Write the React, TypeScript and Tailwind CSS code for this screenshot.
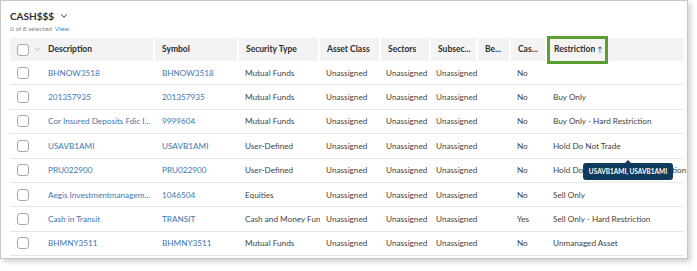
import { ChevronDown } from "lucide-react";

const Cols = [
  { key: "description", label: "Description", width: "w-[143px] shrink-0" },
  { key: "symbol", label: "Symbol", width: "w-[84px] shrink-0" },
  { key: "type", label: "Security Type", width: "w-[81px] shrink-0" },
  { key: "asset", label: "Asset Class", width: "w-[61px] shrink-0" },
  { key: "sectors", label: "Sectors", width: "w-[50px] shrink-0" },
  { key: "subsec", label: "Subsec...", width: "w-[47px] shrink-0" },
  { key: "be", label: "Be...", width: "w-[33px] shrink-0" },
  { key: "cas", label: "Cas...", width: "w-[36px] shrink-0" },
  { key: "restriction", label: "Restriction", width: "flex-1 min-w-0" },
];

const Rows = [
  { description: "BHNOW3518", symbol: "BHNOW3518", type: "Mutual Funds", cas: "No", restriction: "" },
  { description: "201357935", symbol: "201357935", type: "Mutual Funds", cas: "No", restriction: "Buy Only" },
  { description: "Cor Insured Deposits Fdic I...", symbol: "9999604", type: "Mutual Funds", cas: "No", restriction: "Buy Only - Hard Restriction" },
  { description: "USAVB1AMI", symbol: "USAVB1AMI", type: "User-Defined", cas: "No", restriction: "Hold Do Not Trade" },
  { description: "PRU022900", symbol: "PRU022900", type: "User-Defined", cas: "No", restriction: "Hold Do Not Trade - Hard Restriction" },
  { description: "Aegis Investmentmanagem...", symbol: "1046504", type: "Equities", cas: "No", restriction: "Sell Only" },
  { description: "Cash in Transit", symbol: "TRANSIT", type: "Cash and Money Funds", cas: "Yes", restriction: "Sell Only - Hard Restriction" },
  { description: "BHMNY3511", symbol: "BHMNY3511", type: "Mutual Funds", cas: "No", restriction: "Unmanaged Asset" },
];

const Checkbox = () => (
  <span className="block w-[12px] h-[12px] rounded-[3px] border border-[#a8a8a8] bg-white shrink-0" />
);

export default function App() {
  return (
    <div className="w-[697px] h-[271px] bg-white font-['Lato',sans-serif]">
      <div className="relative w-[688px] h-[259px] border border-[#c6c6c6] bg-white shadow-[3px_3px_5px_rgba(0,0,0,0.18)] px-[9px] pt-[8px]">
        <div className="flex items-center gap-[5px] h-[14px] text-[10px] font-bold text-[#2e2e2e]">
          CASH$$$
          <ChevronDown size={10} strokeWidth={2.5} className="text-[#555]" />
        </div>
        <div className="h-[10px] leading-[10px] text-[6.5px] text-[#888] mt-[1px]">
          0 of 8 selected <span className="text-[#4a86c0] ml-[1px]">View</span>
        </div>
        <div className="mt-[4px] w-[674px] text-[8.2px] text-[#444]">
          <div className="flex h-[23px] text-[8.5px] font-bold text-[#2e2e2e]">
            {Cols.map((c, i) => (
              <div
                key={c.key}
                className={`${c.width} relative flex items-center bg-[#f3f3f3] ${i === 0 ? "" : "border-l-2 border-white pl-[7px]"}`}
              >
                {i === 0 && (
                  <div className="flex items-center pl-[7px] w-[38px] gap-[5px]">
                    <Checkbox />
                    <ChevronDown size={7} strokeWidth={2} className="text-[#777]" />
                  </div>
                )}
                <span className="whitespace-nowrap overflow-hidden">{c.label}</span>
                {c.key === "restriction" && (
                  <>
                    <span className="ml-[2px] text-[7px] font-normal">↑</span>
                    <span className="absolute left-0 top-[-2px] w-[61px] h-[28px] border-[3px] border-[#5b9e30]" />
                  </>
                )}
              </div>
            ))}
          </div>
          {Rows.map((r) => (
            <div key={r.description} className="flex h-[24.4px] items-center border-b border-[#e6e6e6] whitespace-nowrap">
              <div className="w-[143px] shrink-0 flex items-center">
                <div className="pl-[7px] w-[38px]">
                  <Checkbox />
                </div>
                <span className="text-[#3a78b4]">{r.description}</span>
              </div>
              <div className="w-[84px] shrink-0 pl-[9px] text-[#3a78b4]">{r.symbol}</div>
              <div className="w-[83px] shrink-0 pl-[8px] overflow-hidden text-clip">{r.type}</div>
              <div className="w-[59px] shrink-0 pl-[6px]">Unassigned</div>
              <div className="w-[50px] shrink-0 pl-[7px]">Unassigned</div>
              <div className="w-[47px] shrink-0 pl-[7px]">Unassigned</div>
              <div className="w-[33px] shrink-0" />
              <div className="w-[36px] shrink-0 pl-[8px]">{r.cas}</div>
              <div className="flex-1 min-w-0 pl-[8px]">{r.restriction}</div>
            </div>
          ))}
        </div>
        <div className="absolute left-[582px] top-[162px] w-[90px] h-[17px] rounded-[3px] bg-[#0e3a5c] flex items-center justify-center text-[6.5px] font-bold text-white whitespace-nowrap">
          USAVB1AMI, USAVB1AMI
          <span className="absolute left-[42px] top-[-3px] w-0 h-0 border-l-[3px] border-r-[3px] border-b-[3px] border-l-transparent border-r-transparent border-b-[#0e3a5c]" />
        </div>
      </div>
    </div>
  );
}
